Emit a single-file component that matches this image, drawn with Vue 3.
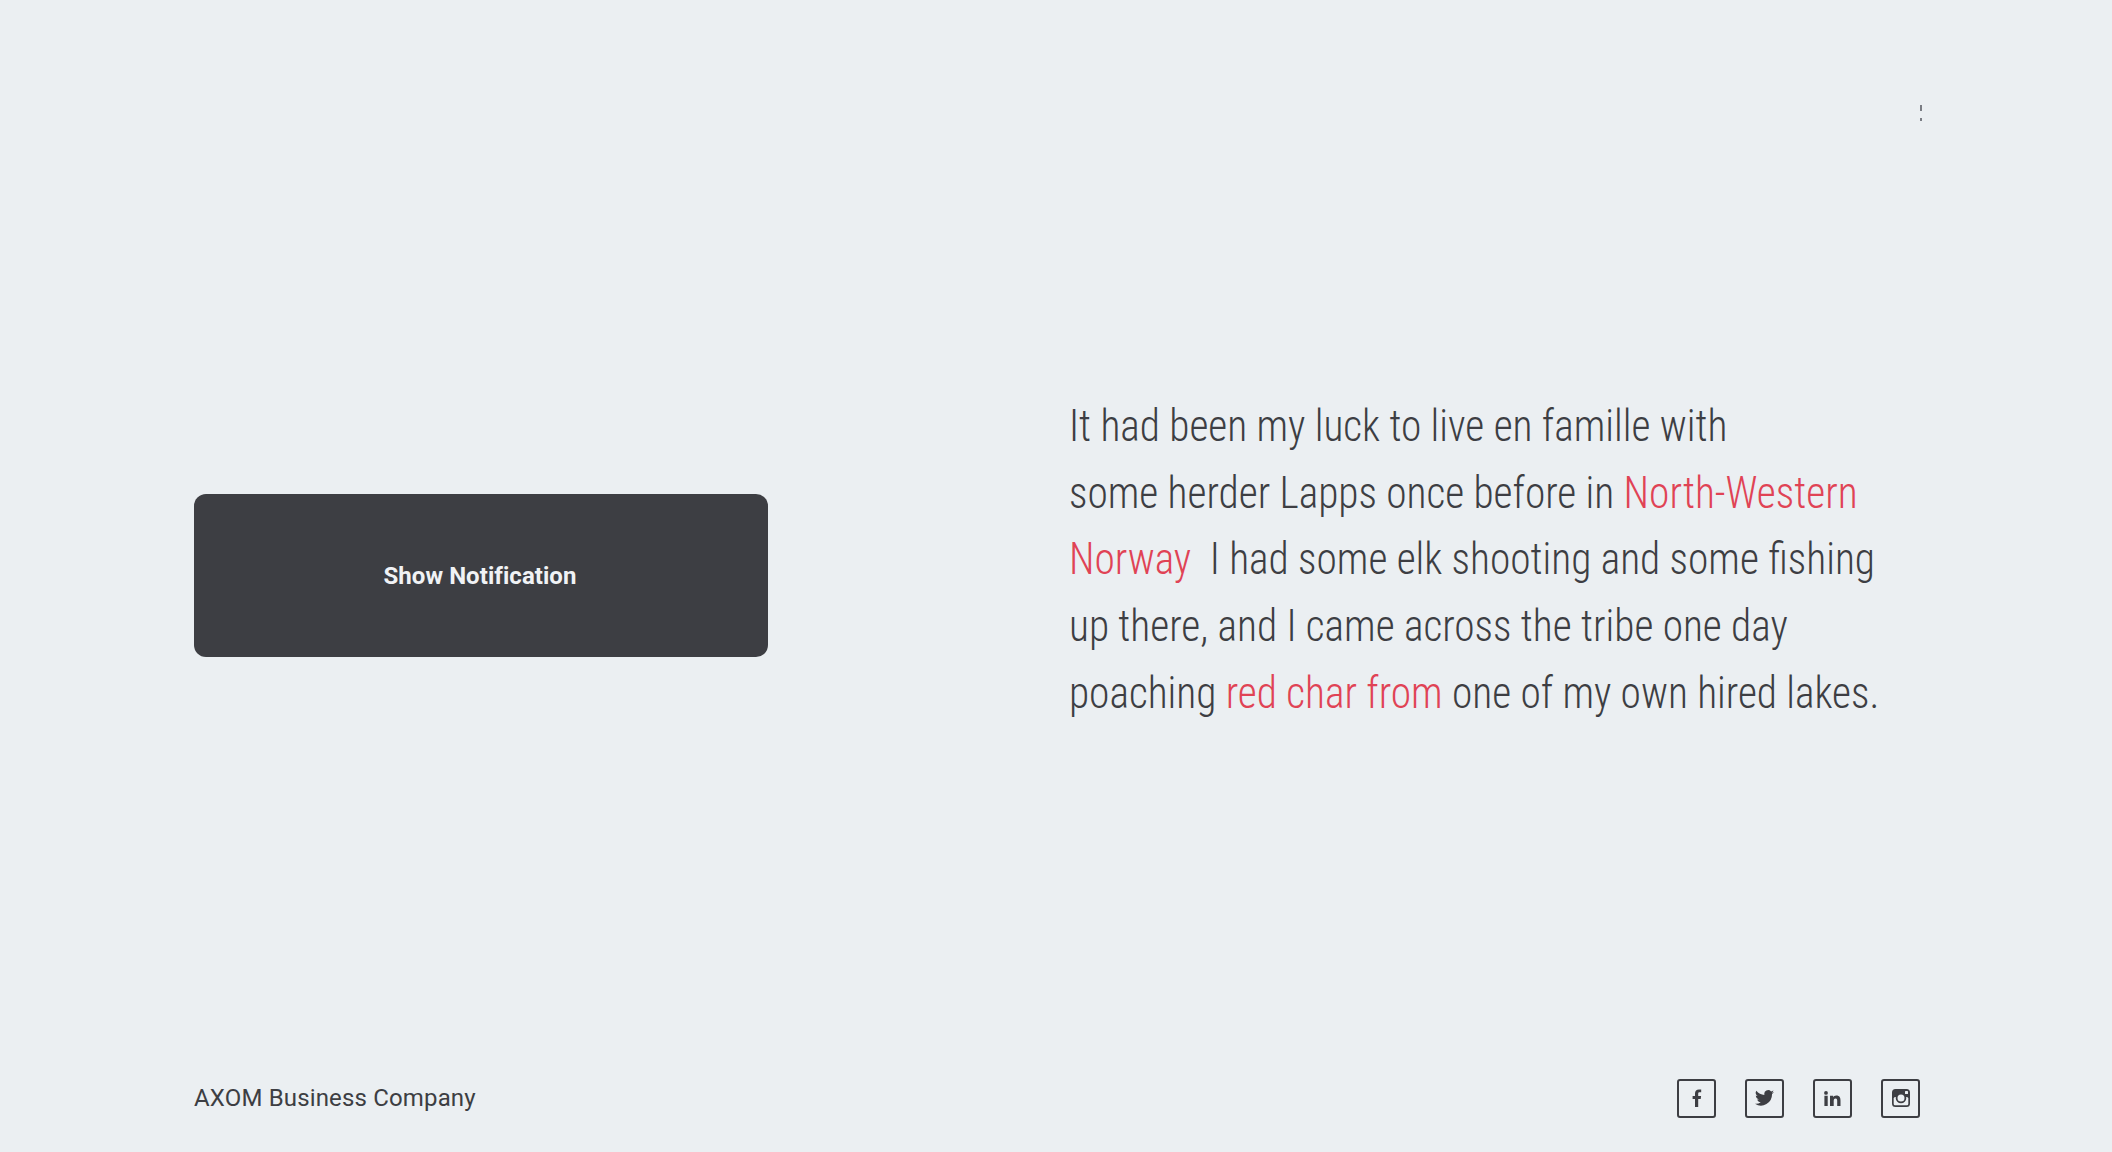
<template>
  <div class="page">
    <div class="topbar"><span class="dots"><i></i><i></i></span></div>
    <main class="content">
      <button class="notify-btn">Show Notification</button>
      <p class="story">
        It had been my luck to live en famille with<br />
        some herder Lapps once before in <span class="red">North-Western</span><br />
        <span class="red">Norway</span>&nbsp; I had some elk shooting and some fishing<br />
        up there, and I came across the tribe one day<br />
        poaching <span class="red">red char from</span> one of my own hired lakes.
      </p>
    </main>
    <footer class="footer">
      <span class="company">AXOM Business Company</span>
      <div class="socials">
        <a class="social"><svg width="10" height="18" viewBox="0 0 10 18" fill="#3d3e43"><path d="M3 18V10H.6V7H3V4.600C3 1.800 4.600.4 6.900.4c1 0 1.900.1 2.300.2v2.700H7.600C6.400 3.300 6.200 3.900 6.200 4.800V7h2.900l-.4 3H6.200v8z"/></svg></a>
        <a class="social"><svg width="19" height="16" viewBox="0 0 24 20" fill="#3d3e43"><path d="M24 2.400c-.9.400-1.800.7-2.800.8 1-.6 1.800-1.600 2.200-2.700-1 .6-2 1-3.100 1.200A4.900 4.900 0 0 0 11.900 6.200C7.800 6 4.200 4 1.700.9a4.900 4.900 0 0 0 1.500 6.600c-.8 0-1.600-.2-2.200-.6 0 2.400 1.700 4.400 3.900 4.900-.7.200-1.500.2-2.200.1.600 1.900 2.400 3.300 4.600 3.400A9.900 9.900 0 0 1 0 17.300 14 14 0 0 0 21.500 5c1-.7 1.900-1.600 2.500-2.600z"/></svg></a>
        <a class="social"><svg width="17" height="15" viewBox="0 0 17 15" fill="#3d3e43"><path d="M.4 4.800h3.300V15H.4zM2 0a1.900 1.900 0 1 1 0 3.800A1.900 1.900 0 0 1 2 0zM6 4.800h3.100v1.400C9.600 5.300 10.700 4.500 12.300 4.500c3.400 0 4.200 2.200 4.200 5.100V15h-3.300v-4.800c0-1.200 0-2.700-1.600-2.700s-1.900 1.300-1.900 2.600V15H6z"/></svg></a>
        <a class="social"><svg width="18" height="18" viewBox="0 0 18 18" fill="none"><path d="M3.500 0h11A3.500 3.500 0 0 1 18 3.500v11a3.500 3.500 0 0 1-3.500 3.500h-11A3.500 3.500 0 0 1 0 14.500v-11A3.500 3.500 0 0 1 3.500 0z" fill="#3d3e43"/><rect x="1.700" y="8" width="14.600" height="8.300" rx="1.500" fill="#ebeff2"/><circle cx="9" cy="9" r="4.400" fill="#ebeff2" stroke="#3d3e43" stroke-width="1.800"/><rect x="13" y="2" width="3" height="3" rx=".6" fill="#ebeff2"/></svg></a>
      </div>
    </footer>
  </div>
</template>

<script setup>
</script>

<style>
html, body {
  margin: 0;
  background: #ebeff2;
}
</style>

<style scoped>
.page {
  height: 1152px;
  box-sizing: border-box;
  padding: 0 192px 0 194px;
  display: flex;
  flex-direction: column;
  background: #ebeff2;
  font-family: Roboto, "Liberation Sans", sans-serif;
  color: #3d3e43;
  overflow: hidden;
}

.topbar {
  height: 393px;
  padding-top: 105px;
  box-sizing: border-box;
  display: flex;
  justify-content: flex-end;
}

.dots {
  display: flex;
  flex-direction: column;
  gap: 7px;
  width: 2px;
  margin-right: -2px;
}

.dots i {
  display: block;
  height: 6px;
  background: #7a7d84;
}

.dots i:last-child {
  height: 3px;
}

.content {
  display: flex;
  align-items: flex-start;
  justify-content: space-between;
  flex: 1;
}

.notify-btn {
  width: 574px;
  height: 163px;
  margin-top: 101px;
  padding: 0 2px 0 0;
  background: #3d3e43;
  color: #f0f2f5;
  border: none;
  border-radius: 12px;
  font-family: inherit;
  font-size: 24px;
  font-weight: 700;
  letter-spacing: 0.05px;
}

.story {
  width: 851px;
  margin: 0;
  font-size: 44px;
  line-height: 66.7px;
  font-weight: 300;
  font-stretch: condensed;
  white-space: nowrap;
  transform: scaleX(0.94);
  transform-origin: left center;
}

.red {
  color: #e04355;
}

.footer {
  display: flex;
  align-items: center;
  justify-content: space-between;
  height: 108px;
}

.company {
  font-size: 24px;
  letter-spacing: 0.16px;
}

.socials {
  display: flex;
  gap: 29px;
}

.social {
  box-sizing: border-box;
  width: 39px;
  height: 39px;
  border: 2px solid #3d3e43;
  border-radius: 3px;
  display: flex;
  align-items: center;
  justify-content: center;
}
</style>
